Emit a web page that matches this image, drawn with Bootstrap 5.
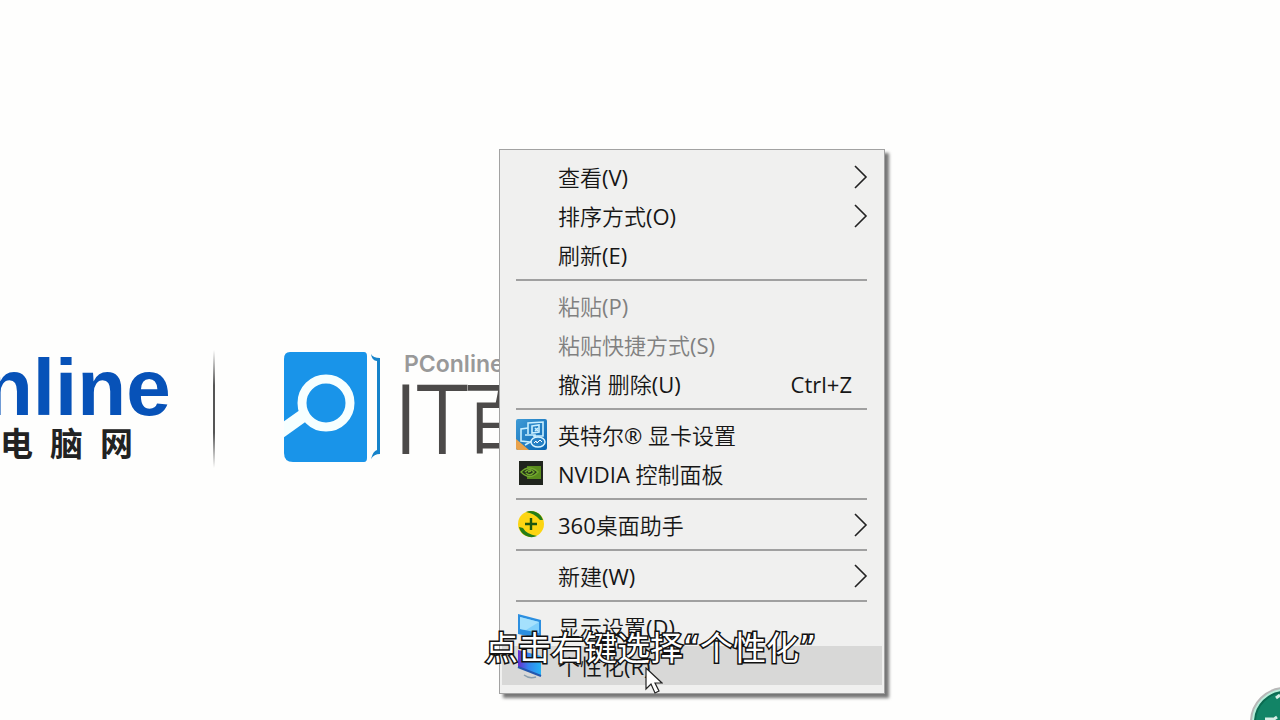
<!DOCTYPE html>
<html lang="zh-CN">
<head>
<meta charset="utf-8">
<meta name="viewport" content="width=device-width, initial-scale=1">
<title>桌面</title>
<link href="https://cdn.jsdelivr.net/npm/bootstrap@5.3.0/dist/css/bootstrap.min.css" rel="stylesheet">
<style>
body { background: #fefefd; font-family: "Open Sans", "Noto Sans CJK SC DemiLight", "Noto Sans CJK SC", sans-serif; }
.desktop { min-height: 100vh; }
.wallpaper { padding-top: 344px; }

.site-logo { margin-left: -16px; width: 184px; color: #0752b8; }
.site-name { font: 700 80px/88px "Liberation Sans", sans-serif; height: 82px; }
.site-cn { font: 700 33px/32px "Noto Sans CJK SC", sans-serif; color: #222; gap: 17px; padding-left: 16px; }
.logo-rule { width: 2px; height: 118px; margin: 6px 69px 0 45px; background: linear-gradient(transparent, #555 30%, #555 70%, transparent); }
.book { width: 98px; height: 110px; margin: 8px 20px 0 0; }
.wiki-small { font: 600 23px/28px "Inter", sans-serif; color: #999; margin: 6px 0 0 2px; }
.wiki-big { color: #4c4a49; white-space: nowrap; margin: -3px 0 0 -8px; }
.wiki-it { font: 300 94px/84px "Open Sans", sans-serif; -webkit-text-stroke: 2px #4c4a49; }
.wiki-cn { font: 400 78px/76px "Noto Sans CJK SC", sans-serif; margin-left: -4px; }

.context-menu { left: 499px; top: 149px; width: 386px; padding: 7px 2px 8px; background: #f0f0ef; border: 1px solid #a2a2a2; box-shadow: 4px 4px 3px #777; }
.menu-row { height: 39px; padding: 0 14px; border: 0; background: transparent; font-size: 22px; line-height: 36px; color: #161616; text-align: left; }
.menu-row:disabled { color: #808080; }
.menu-row.is-current { background: #d8d8d7; }
.menu-icon { width: 42px; height: 32px; }
.menu-label { flex: 1; white-space: nowrap; }
.menu-key { padding-right: 16px; }
.menu-sep { height: 2px; margin: 5px 15px 5px 14px; border: 0; background: #a0a0a0; opacity: 1; }
.arrow { width: 14px; height: 24px; }

.caption-line { left: 485px; top: 626px; font: 400 33px/46px "DejaVu Sans", "Noto Sans CJK SC", sans-serif; color: #fff; -webkit-text-stroke: 3px #111; paint-order: stroke fill; white-space: nowrap; }
.pointer { left: 644px; top: 667px; width: 19px; height: 28px; }
.orb { right: -40px; bottom: -37px; width: 71px; height: 71px; }
</style>
</head>
<body>
<main class="desktop position-relative overflow-hidden">
  <div class="wallpaper d-flex align-items-start">
    <div class="site-logo flex-shrink-0">
      <div class="site-name">nline</div>
      <div class="site-cn d-flex"><span>电</span><span>脑</span><span>网</span></div>
    </div>
    <div class="logo-rule flex-shrink-0"></div>
    <svg class="book flex-shrink-0" viewBox="0 0 98 110" aria-hidden="true">
      <path d="M6 0H80Q83 0 83 4V106Q83 110 80 110H9Q0 110 0 101V7Q0 0 6 0Z" fill="#1994e9"/>
      <circle cx="42" cy="51" r="24" fill="#1994e9" stroke="#f6ffff" stroke-width="9"/>
      <path d="M-4 80L20 63" stroke="#f6ffff" stroke-width="13"/>
      <path d="M87 2Q89 6 96 6V102Q90 102 87 107Q89 99 93 98V9Q88 9 87 2Z" fill="#1683ca"/>
    </svg>
    <div class="flex-shrink-0">
      <div class="wiki-small">PConline</div>
      <div class="wiki-big d-flex"><span class="wiki-it">IT</span><span class="wiki-cn">百</span></div>
    </div>
  </div>

  <nav class="context-menu position-absolute d-flex flex-column" aria-label="桌面菜单">
    <button class="menu-row d-flex align-items-center"><span class="menu-icon"></span><span class="menu-label">查看(V)</span><svg class="arrow" viewBox="0 0 14 24"><path d="M1 1L12 12L1 23" fill="none" stroke="#222" stroke-width="1.6"/></svg></button>
    <button class="menu-row d-flex align-items-center"><span class="menu-icon"></span><span class="menu-label">排序方式(O)</span><svg class="arrow" viewBox="0 0 14 24"><path d="M1 1L12 12L1 23" fill="none" stroke="#222" stroke-width="1.6"/></svg></button>
    <button class="menu-row d-flex align-items-center"><span class="menu-icon"></span><span class="menu-label">刷新(E)</span></button>
    <hr class="menu-sep">
    <button class="menu-row d-flex align-items-center" disabled><span class="menu-icon"></span><span class="menu-label">粘贴(P)</span></button>
    <button class="menu-row d-flex align-items-center" disabled><span class="menu-icon"></span><span class="menu-label">粘贴快捷方式(S)</span></button>
    <button class="menu-row d-flex align-items-center"><span class="menu-icon"></span><span class="menu-label">撤消 删除(U)</span><span class="menu-key">Ctrl+Z</span></button>
    <hr class="menu-sep">
    <button class="menu-row d-flex align-items-center">
      <svg class="menu-icon" viewBox="0 0 42 32"><defs><linearGradient id="blue" x2="1" y2="1"><stop stop-color="#3f9bd6"/><stop offset="1" stop-color="#0965b2"/></linearGradient></defs><rect width="31" height="31" rx="2" fill="url(#blue)"/><path d="M0 20L13 31H2Q0 31 0 29Z" fill="#e9a24b"/><g fill="none" stroke="#c9efff" stroke-width="1.6"><path d="M12 15V4L27 3V17H17M16 7L23 6V13L16 14Z"/><path d="M12 9L5 10V22L14 23M9 16H19V21M9 26L16 22"/><path d="M19 9L22 12M19 12L22 9"/></g><ellipse cx="22" cy="23" rx="7" ry="5" fill="#2680c4" stroke="#d9f4ff" stroke-width="1.5"/><path d="M18 24L20 22L21 24L24 21L26 23" fill="none" stroke="#fff"/></svg>
      <span class="menu-label">英特尔® 显卡设置</span></button>
    <button class="menu-row d-flex align-items-center">
      <svg class="menu-icon" viewBox="0 0 42 32"><rect x="3" y="3" width="24" height="24" fill="#20241d"/><path d="M11 8H25V21H11Z" fill="#598b1d"/><path d="M5 14Q13 6 22 14Q14 23 5 14Z" fill="#26351b" stroke="#73a92e" stroke-width="1.4"/><path d="M9 14Q14 9 18 14Q14 19 10 15M12 14L15 13" fill="none" stroke="#73a92e" stroke-width="1.4"/></svg>
      <span class="menu-label">NVIDIA 控制面板</span></button>
    <hr class="menu-sep">
    <button class="menu-row d-flex align-items-center">
      <svg class="menu-icon" viewBox="0 0 42 32"><circle cx="15" cy="15" r="13" fill="#fcd512"/><path d="M10 3A13 13 0 0 1 27 11L24 11Q18 4 10 3ZM3 18A13 13 0 0 0 21 27Q10 25 7 19Z" fill="#247d18"/><path d="M15 9V21M9 15H21" stroke="#1d5710" stroke-width="2.4"/></svg>
      <span class="menu-label">360桌面助手</span><svg class="arrow" viewBox="0 0 14 24"><path d="M1 1L12 12L1 23" fill="none" stroke="#222" stroke-width="1.6"/></svg></button>
    <hr class="menu-sep">
    <button class="menu-row d-flex align-items-center"><span class="menu-icon"></span><span class="menu-label">新建(W)</span><svg class="arrow" viewBox="0 0 14 24"><path d="M1 1L12 12L1 23" fill="none" stroke="#222" stroke-width="1.6"/></svg></button>
    <hr class="menu-sep">
    <button class="menu-row d-flex align-items-center">
      <svg class="menu-icon" viewBox="0 0 42 32"><path d="M2 3L25 9V28L2 23Z" fill="#2c8fe0"/><path d="M4 6L23 11V22L4 18Z" fill="#7fd0fb"/><path d="M4 6L23 11L10 19L4 18Z" fill="#a5e1fd"/></svg>
      <span class="menu-label">显示设置(D)</span></button>
    <button class="menu-row is-current d-flex align-items-center">
      <svg class="menu-icon" viewBox="0 0 42 32"><defs><linearGradient id="theme"><stop stop-color="#6a2bd0"/><stop offset=".45" stop-color="#3484ee"/><stop offset="1" stop-color="#27b2f5"/></linearGradient></defs><path d="M2 0L25 6V26L2 17Z" fill="url(#theme)"/><path d="M2 17L25 26" stroke="#2458ae" stroke-width="2"/><path d="M8 25Q13 29 20 27" fill="none" stroke="#8b9fae" stroke-width="1.5"/></svg>
      <span class="menu-label">个性化(R)</span></button>
  </nav>

  <p class="caption-line position-absolute m-0">点击右键选择“个性化”</p>
  <svg class="pointer position-absolute" viewBox="0 0 19 28" aria-hidden="true"><path d="M2 1V22L7 17L11 26L15 24L11 16H18Z" fill="#fff" stroke="#222" stroke-width="1.2"/></svg>
  <svg class="orb position-absolute" viewBox="0 0 71 71" aria-hidden="true"><circle cx="36" cy="36" r="34" fill="#b9eedb" stroke="#b8b8b8" stroke-width="2"/><circle cx="36" cy="36" r="30" fill="#128466" stroke="#0b6b51" stroke-width="2"/><path d="M16 33H25L28 31M27 12L31 9" stroke="#d5eee5" stroke-width="3"/></svg>
</main>
<script src="https://cdn.jsdelivr.net/npm/bootstrap@5.3.0/dist/js/bootstrap.bundle.min.js"></script>
</body>
</html>
